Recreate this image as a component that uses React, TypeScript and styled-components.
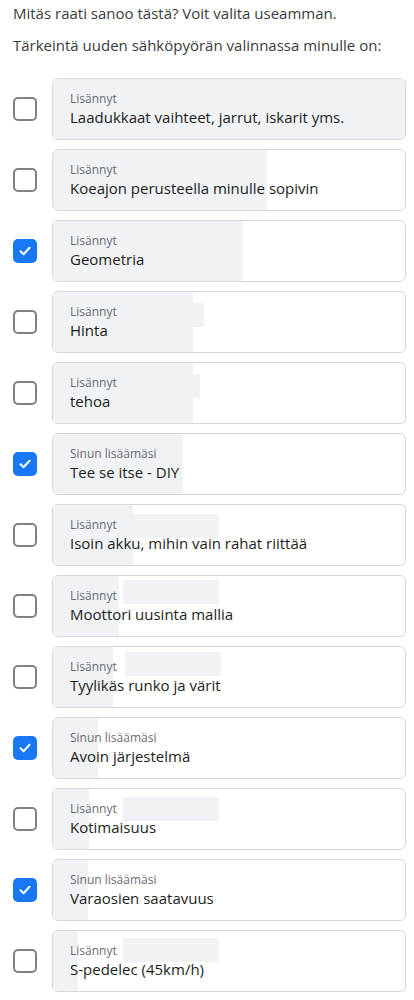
import React from "react";
import styled, { createGlobalStyle } from "styled-components";

const Global = createGlobalStyle`
  html, body { margin: 0; padding: 0; background: #ffffff; }
  body { font-family: "Segoe UI", "Open Sans", "Noto Sans", Arial, sans-serif; }
`;

const Page = styled.div`
  width: 414px;
  padding: 1px 0 0 0;
  box-sizing: border-box;
`;

const Intro = styled.p`
  margin: 0;
  padding: 0 13px;
  font-size: 15px;
  line-height: 24px;
  color: #3a3b3c;
  & + & { margin-top: 8px; }
`;

const List = styled.div`
  display: flex;
  flex-direction: column;
  gap: 9px;
  margin-top: 21px;
  padding: 0 8px 0 13px;
`;

const Row = styled.label`
  display: flex;
  align-items: center;
  gap: 15px;
`;

const Box = styled.span<{ $checked: boolean }>`
  flex: 0 0 auto;
  width: 24px;
  height: 24px;
  box-sizing: border-box;
  border-radius: 5px;
  border: ${(p) => (p.$checked ? "none" : "2px solid #7f8185")};
  background: ${(p) => (p.$checked ? "#1877f2" : "#ffffff")};
  display: flex;
  align-items: center;
  justify-content: center;
`;

const Card = styled.div`
  position: relative;
  flex: 1 1 auto;
  height: 62px;
  box-sizing: border-box;
  border: 1px solid #d6d8dc;
  border-radius: 6px;
  background: #ffffff;
  overflow: hidden;
  display: flex;
  flex-direction: column;
  justify-content: center;
  padding: 0 17px;
`;

const Bar = styled.span`
  position: absolute;
  left: 0;
  top: 0;
  bottom: 0;
  background: #f0f2f5;
`;

const Placeholder = styled.span`
  position: absolute;
  left: 70px;
  width: 96px;
  height: 24px;
  background: #f0f2f5;
`;

const Caption = styled.span`
  position: relative;
  font-size: 12px;
  line-height: 16px;
  color: #6b6d72;
`;

const Label = styled.span`
  position: relative;
  font-size: 15px;
  line-height: 20px;
  color: #1c1e21;
`;

type Item = {
  caption: string;
  label: string;
  checked: boolean;
  bar: number | "full";
  ph?: { left: number; width: number; top: number };
};

const items: Item[] = [
  { caption: "Lisännyt", label: "Laadukkaat vaihteet, jarrut, iskarit yms.", checked: false, bar: "full" },
  { caption: "Lisännyt", label: "Koeajon perusteella minulle sopivin", checked: false, bar: 214 },
  { caption: "Lisännyt", label: "Geometria", checked: true, bar: 190 },
  { caption: "Lisännyt", label: "Hinta", checked: false, bar: 140, ph: { left: 139, width: 12, top: 11 } },
  { caption: "Lisännyt", label: "tehoa", checked: false, bar: 140, ph: { left: 139, width: 8, top: 11 } },
  { caption: "Sinun lisäämäsi", label: "Tee se itse - DIY", checked: true, bar: 130 },
  { caption: "Lisännyt", label: "Isoin akku, mihin vain rahat riittää", checked: false, bar: 80, ph: { left: 79, width: 87, top: 9 } },
  { caption: "Lisännyt", label: "Moottori uusinta mallia", checked: false, bar: 66, ph: { left: 70, width: 96, top: 4 } },
  { caption: "Lisännyt", label: "Tyylikäs runko ja värit", checked: false, bar: 60, ph: { left: 72, width: 96, top: 5 } },
  { caption: "Sinun lisäämäsi", label: "Avoin järjestelmä", checked: true, bar: 45 },
  { caption: "Lisännyt", label: "Kotimaisuus", checked: false, bar: 36, ph: { left: 70, width: 96, top: 8 } },
  { caption: "Sinun lisäämäsi", label: "Varaosien saatavuus", checked: true, bar: 35 },
  { caption: "Lisännyt", label: "S-pedelec (45km/h)", checked: false, bar: 25, ph: { left: 70, width: 96, top: 7 } },
];

const Check = () => (
  <svg width="14" height="14" viewBox="0 0 14 14" fill="none">
    <path d="M2.5 7.3 L5.6 10.2 L11.5 3.8" stroke="#ffffff" strokeWidth="2" strokeLinecap="round" strokeLinejoin="round" />
  </svg>
);

export default function App() {
  return (
    <Page>
      <Global />
      <Intro>Mitäs raati sanoo tästä? Voit valita useamman.</Intro>
      <Intro>Tärkeintä uuden sähköpyörän valinnassa minulle on:</Intro>
      <List>
        {items.map((it, i) => (
          <Row key={i}>
            <Box $checked={it.checked}>{it.checked && <Check />}</Box>
            <Card>
              <Bar style={{ width: it.bar === "full" ? "100%" : `${it.bar}px` }} />
              {it.ph && <Placeholder style={{ left: it.ph.left, width: it.ph.width, top: it.ph.top }} />}
              <Caption>{it.caption}</Caption>
              <Label>{it.label}</Label>
            </Card>
          </Row>
        ))}
      </List>
    </Page>
  );
}
